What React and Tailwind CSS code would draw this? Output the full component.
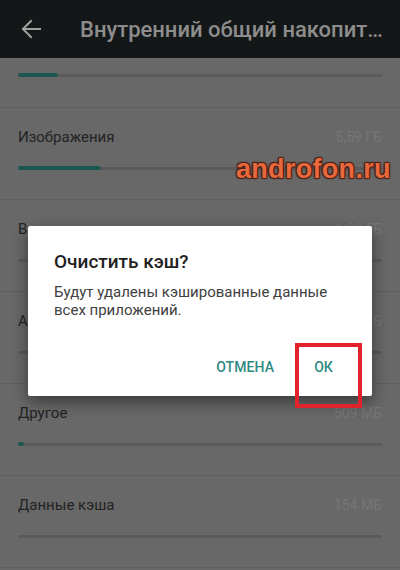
import React from "react";

const rows = [
  { name: "Изображения", value: "5,59 ГБ", fill: 83 },
  { name: "Видео", value: "1,20 ГБ", fill: 0 },
  { name: "Аудио", value: "0,50 ГБ", fill: 0 },
  { name: "Другое", value: "509 МБ", fill: 6 },
  { name: "Данные кэша", value: "154 МБ", fill: 0 },
];

function Bar({ fill }) {
  return (
    <div className="relative h-[4px] w-[364px] flex items-center">
      <div className="h-[3px] w-full bg-[#5a5a5a] rounded-full" />
      {fill > 0 && (
        <div
          className="absolute left-0 top-0 h-[4px] rounded-full bg-[#1c574f]"
          style={{ width: fill + "px" }}
        />
      )}
    </div>
  );
}

export default function App() {
  return (
    <div
      className="relative w-[400px] h-[570px] overflow-hidden bg-[#686868]"
      style={{ fontFamily: "Roboto, 'Noto Sans', sans-serif" }}
    >
      {/* Top bar */}
      <div className="h-[58px] bg-[#141718] flex items-center">
        <svg width="24" height="24" viewBox="0 0 24 24" className="ml-[19px]">
          <path
            d="M21 12H4M12 4l-8 8 8 8"
            fill="none"
            stroke="#a0a0a0"
            strokeWidth="2"
            strokeLinecap="square"
          />
        </svg>
        <div className="ml-[37px] text-[22px] font-medium text-[#8d8d8d] whitespace-nowrap">
          Внутренний общий накопит…
        </div>
      </div>

      {/* First partial section */}
      <div className="h-[50px] border-b border-[#5f5f5f] pl-[18px] pt-[15px]">
        <Bar fill={40} />
      </div>

      {rows.map((r) => (
        <div
          key={r.name}
          className="h-[92px] border-b border-[#5f5f5f] px-[18px] pt-[19px] flex flex-col"
        >
          <div className="flex justify-between items-center h-[20px]">
            <span className="text-[15px] text-[#232323]">{r.name}</span>
            <span className="text-[14px] text-[#767676]">{r.value}</span>
          </div>
          <div className="mt-[19px]">
            <Bar fill={r.fill} />
          </div>
        </div>
      ))}

      {/* Watermark */}
      <div
        className="absolute left-[236px] top-[149px] text-[27px] font-bold text-[#e8673c] tracking-[0.3px]"
        style={{
          fontFamily: "'Liberation Sans', Arial, sans-serif",
          textShadow:
            "0 0 1px #4a2014, 1px 1px 1px #4a2014, -1px -1px 1px #4a2014, 1px -1px 1px #4a2014, -1px 1px 1px #4a2014",
        }}
      >
        androfon.ru
      </div>

      {/* Dialog */}
      <div className="absolute left-[28px] top-[226px] w-[344px] h-[170px] bg-white rounded-[2px] shadow-[0_6px_16px_rgba(0,0,0,0.45)] px-[26px] pt-[24px]">
        <div className="text-[19px] font-medium text-[#212121] leading-[24px]">
          Очистить кэш?
        </div>
        <div className="mt-[9px] text-[15px] leading-[18px] text-[#404040]">
          Будут удалены кэшированные данные
          <br />
          всех приложений.
        </div>
        <div className="absolute right-[39px] bottom-[18px] flex items-center gap-[40px] text-[14px] font-medium text-[#2e8a82] tracking-[0.1px]">
          <span>ОТМЕНА</span>
          <span>ОК</span>
        </div>
      </div>

      {/* Red highlight box */}
      <div className="absolute left-[295px] top-[343px] w-[67px] h-[65px] border-[4px] border-[#e0232c]" />
    </div>
  );
}
